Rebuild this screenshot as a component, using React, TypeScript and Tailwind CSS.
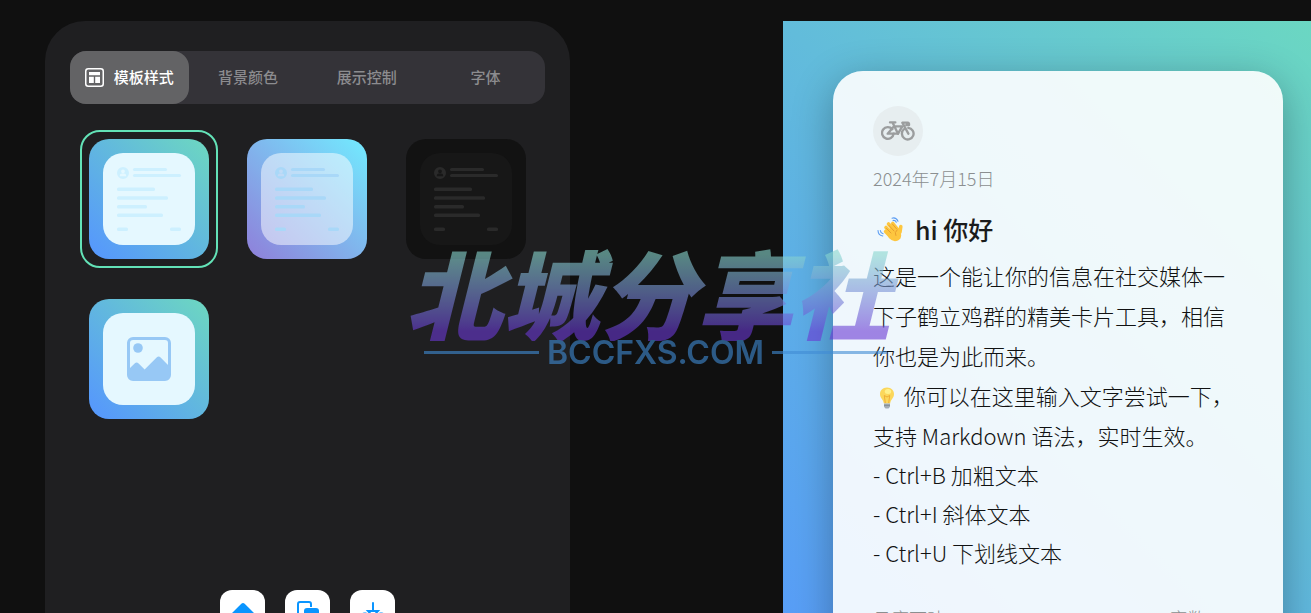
import { useState } from "react";
import type { ReactNode } from "react";

interface Template {
  id: string;
  label: string;
  background: string;
  inner: string;
  lines: string;
  picture?: boolean;
}

const tabs = ["模板样式", "背景颜色", "展示控制", "字体"];

const templates: Template[] = [
  {
    id: "ocean",
    label: "清新模板",
    background: "bg-linear-[45deg,#5595ff,#6dd8c0]",
    inner: "bg-[#e5f8ff]",
    lines: "text-[#cdf0ff]",
  },
  {
    id: "glass",
    label: "玻璃模板",
    background: "bg-linear-[45deg,#8f7fda,#72ebff]",
    inner: "bg-white/50",
    lines: "text-[#a9d8f8]",
  },
  {
    id: "dark",
    label: "深色模板",
    background: "bg-[#121212]",
    inner: "bg-[#171717]",
    lines: "text-[#2a2a2a]",
  },
  {
    id: "picture",
    label: "图片模板",
    background: "bg-linear-[45deg,#5595ff,#6dd8c0]",
    inner: "bg-[#e5f8ff]",
    lines: "text-[#97c8f5]",
    picture: true,
  },
];

function LayoutIcon() {
  return (
    <svg viewBox="0 0 19 19" className="size-[19px]" fill="none">
      <rect x="0.75" y="0.75" width="17.5" height="17.5" rx="2.5" stroke="currentColor" strokeWidth="1.5" />
      <path d="M4 4h11v3.2H4zM4 8.8h4.8V15H4zM10.2 8.8H15V15h-4.8z" fill="currentColor" />
    </svg>
  );
}

function TextLines() {
  return (
    <svg viewBox="0 0 92 92" className="size-full" fill="currentColor">
      <path
        fillRule="evenodd"
        d="M20 14a6 6 0 1 1 0 12a6 6 0 0 1 0-12zM20 16.4a1.9 1.9 0 1 0 0 3.8a1.9 1.9 0 0 0 0-3.8zM16.8 23.2h6.4c0-2.6-1.4-2.6-3.2-2.6s-3.2 0-3.2 2.6z"
      />
      <rect x="30" y="15" width="34" height="3" rx="1.5" />
      <rect x="30" y="21" width="48" height="3" rx="1.5" />
      <rect x="14" y="34.5" width="38" height="3.5" rx="1.5" />
      <rect x="14" y="43.2" width="51" height="3.5" rx="1.5" />
      <rect x="14" y="52" width="30" height="3.5" rx="1.5" />
      <rect x="14" y="60.5" width="46" height="3.5" rx="1.5" />
      <rect x="14" y="74.5" width="11" height="3.5" rx="1.5" />
      <rect x="67" y="74.5" width="11" height="3.5" rx="1.5" />
    </svg>
  );
}

function PictureIcon() {
  return (
    <svg viewBox="0 0 92 92" className="size-full" fill="currentColor">
      <rect x="25.5" y="25.5" width="41" height="41" rx="4.5" fill="none" stroke="currentColor" strokeWidth="3" />
      <circle cx="35" cy="35" r="4.8" />
      <path d="M26 56l5.6-5.6q2-1.6 4 0l6 6L53.600 44.500q2-1.800 4 0L67 54v8q0 5-5 5H31q-5 0-5-5z" />
    </svg>
  );
}

function BikeIcon() {
  return (
    <svg
      viewBox="0 0 102 60"
      className="h-5 w-[34px]"
      fill="none"
      stroke="currentColor"
      strokeWidth="7"
      strokeLinecap="round"
      strokeLinejoin="round"
    >
      <path d="M34 24.500A17.500 17.500 0 1 0 38 38H20L39 16h25L51 38L35 5M27 4h16" />
      <path d="M38 38h13" />
      <path d="M69 24.500A17.500 17.500 0 1 0 82 20.500M82 38L64 5h16q5 0 4 7h-8" />
    </svg>
  );
}

function WaveEmoji() {
  return (
    <svg viewBox="0 0 26 26" className="size-[26px]" fill="none" role="img" aria-label="挥手">
      <g stroke="#fdc63f" strokeWidth="3.6" strokeLinecap="round">
        <path d="M8.600 15.500L14 21M9 11.500L16 19M11.500 8L19 16M15.800 7.500L21 14M23.800 10.500L23 16" />
      </g>
      <path d="M12 13l6-4 5 5q3 8-2 10.500q-5 2.200-9-2.500l-3-5z" fill="#fdc63f" />
      <path d="M9.500 12.500l4.500 4.500M12 9.500l5 5.500M15.500 8.200l4.200 4.800M20 14q-3 2.500-1.200 5.500" stroke="#e59a2c" strokeWidth="0.9" strokeLinecap="round" />
      <path d="M15 2.200q4-1.200 6 3M16 4.500q2.200-.5 3.300 1.700M1 14.500q.2 4.800 4.800 5.500M3.300 14.500q.3 2.700 2.800 3.300" stroke="#5b9df3" strokeWidth="1.1" strokeLinecap="round" />
    </svg>
  );
}

function BulbEmoji() {
  return (
    <svg viewBox="0 0 26 24" className="inline-block h-6 w-[26px] align-text-bottom" role="img" aria-label="灯泡">
      <path d="M14 .5c-4.500 0-7 3-7 6.600c0 4.200 3.300 5.200 3.800 9.400h6.400c.5-4.200 3.800-5.200 3.800-9.400c0-3.600-2.500-6.600-7-6.600z" fill="#fbd75b" />
      <path d="M12.300 16l-1-7.500l2.700 1.500l2.700-1.500l-1 7.500" fill="none" stroke="#eda932" strokeWidth="0.9" />
      <ellipse cx="15" cy="4.500" rx="3.2" ry="2.5" fill="#fff08a" />
      <path d="M11 16.500h6v3.200l-1.500 1.800h-3L11 19.700z" fill="#a4adb5" />
      <path d="M11 18.300h6" stroke="#78838c" strokeWidth="0.8" />
    </svg>
  );
}

function ActionButton({ label, children }: { label: string; children: ReactNode }) {
  return (
    <button
      type="button"
      aria-label={label}
      className="flex h-11 w-[45px] items-center justify-center rounded-xl bg-white text-[#0a95ff]"
    >
      {children}
    </button>
  );
}

function Watermark() {
  return (
    <div className="pointer-events-none absolute inset-0 flex flex-col items-center justify-center opacity-60">
      <p className="bg-linear-to-b from-[#88d6cf] from-10% to-[#6a38d4] to-90% bg-clip-text pr-7 pb-1 pl-3 text-[97px] leading-[92px] font-black whitespace-nowrap text-transparent italic">
        北城分享社
      </p>
      <div className="-mt-1 flex items-center gap-2 text-[#408cd5]">
        <span className="h-[3px] w-[115px] bg-current" />
        <span className="font-['Inter',sans-serif] text-[32px] leading-8 font-semibold">BCCFXS.COM</span>
        <span className="h-[3px] w-[115px] bg-current" />
      </div>
    </div>
  );
}

export default function App() {
  const [activeTab, setActiveTab] = useState(tabs[0]);
  const [selected, setSelected] = useState("ocean");

  return (
    <div className="relative flex h-screen items-start gap-[213px] overflow-hidden bg-[#101010] pt-[21px] pl-[45px] font-['Noto_Sans_CJK_SC',sans-serif]">
      {/* Settings panel */}
      <aside className="flex h-screen w-[525px] shrink-0 flex-col rounded-[40px] rounded-b-none bg-[#1f1f21] px-[25px] pt-[30px]">
        <div role="tablist" className="grid h-[53px] shrink-0 grid-cols-4 rounded-2xl bg-[#343338]">
          {tabs.map((tab) => (
            <button
              key={tab}
              type="button"
              role="tab"
              aria-selected={tab === activeTab}
              onClick={() => setActiveTab(tab)}
              className={
                tab === activeTab
                  ? "flex items-center justify-center gap-[10px] rounded-2xl bg-[#636365] text-[15px] font-medium text-white"
                  : "flex items-center justify-center gap-[10px] rounded-2xl text-[15px] font-medium text-[#8c8c8f]"
              }
            >
              {tab === activeTab && <LayoutIcon />}
              {tab}
            </button>
          ))}
        </div>

        <div className="mt-[26px] grid grid-cols-3 justify-items-center gap-y-[22px]">
          {templates.map((template) => (
            <button
              key={template.id}
              type="button"
              aria-label={template.label}
              aria-pressed={template.id === selected}
              onClick={() => setSelected(template.id)}
              className={
                template.id === selected
                  ? "rounded-[20px] border-2 border-[#63e2b7] p-[7px]"
                  : "rounded-[20px] border-2 border-transparent p-[7px]"
              }
            >
              <div className={`size-[120px] rounded-[20px] p-[14px] ${template.background}`}>
                <div className={`size-full rounded-[20px] ${template.inner} ${template.lines}`}>
                  {template.picture ? <PictureIcon /> : <TextLines />}
                </div>
              </div>
            </button>
          ))}
        </div>

        <div className="mt-auto flex justify-center gap-5">
          <ActionButton label="清空">
            <svg viewBox="0 0 24 24" className="size-6" fill="currentColor">
              <path d="M10.300 3.800q1.700-1.600 3.400 0L23 13l-9.300 8.200q-1.700 1.500-3.400 0L1 13z" />
            </svg>
          </ActionButton>
          <ActionButton label="复制">
            <svg viewBox="0 0 24 24" className="size-6" fill="none">
              <path d="M6 17H4q-2 0-2-2V4q0-2 2-2h9q2 0 2 2v3" stroke="currentColor" strokeWidth="2" />
              <rect x="8" y="8" width="15" height="14" rx="3" fill="currentColor" />
            </svg>
          </ActionButton>
          <ActionButton label="下载">
            <svg viewBox="0 0 24 24" className="size-6" fill="none" stroke="currentColor" strokeWidth="2" strokeLinecap="round">
              <path d="M12 3v8M7 11h10l-5 5.500zM5 13.500H3q-1 0-1 1V20q0 2 2 2h16q2 0 2-2v-5.500q0-1-1-1h-2" />
            </svg>
          </ActionButton>
        </div>
      </aside>

      {/* Card preview */}
      <main className="min-w-0 flex-1 bg-linear-[45deg,#5595ff,#6bd7c2] pt-[50px] pr-7 pb-28 pl-[50px]">
        <article className="rounded-[30px] bg-white/90 px-10 pt-[35px] pb-10 shadow-[0_10px_40px_rgba(0,0,0,0.3)]">
          <div className="flex size-[50px] items-center justify-center rounded-full bg-[#e7eef0] text-[#9b9d9e]">
            <BikeIcon />
          </div>
          <time dateTime="2024-07-15" className="mt-2 block text-[18px] leading-7 font-light text-[#8b8f90]">
            2024年7月15日
          </time>
          <h1 className="mt-[14px] flex items-center gap-3 pl-1 text-[25px] leading-[46px] font-medium text-[#1b1c1c]">
            <WaveEmoji />
            hi 你好
          </h1>
          <div className="mt-[3px] text-[22px] leading-10 font-light text-[#111212]">
            <p>这是一个能让你的信息在社交媒体一下子鹤立鸡群的精美卡片工具，相信你也是为此而来。</p>
            <p>
              <BulbEmoji /> 你可以在这里输入文字尝试一下，支持 Markdown 语法，实时生效。
            </p>
            <ul className="leading-[39px]">
              <li>- Ctrl+B 加粗文本</li>
              <li>- Ctrl+I 斜体文本</li>
              <li>- Ctrl+U 下划线文本</li>
            </ul>
          </div>
          <footer className="mt-8 flex justify-between text-[18px] leading-7 font-light text-[#8b8f90]">
            <span>日度可叶</span>
            <span>字数: 191</span>
          </footer>
        </article>
      </main>

      <Watermark />
    </div>
  );
}
